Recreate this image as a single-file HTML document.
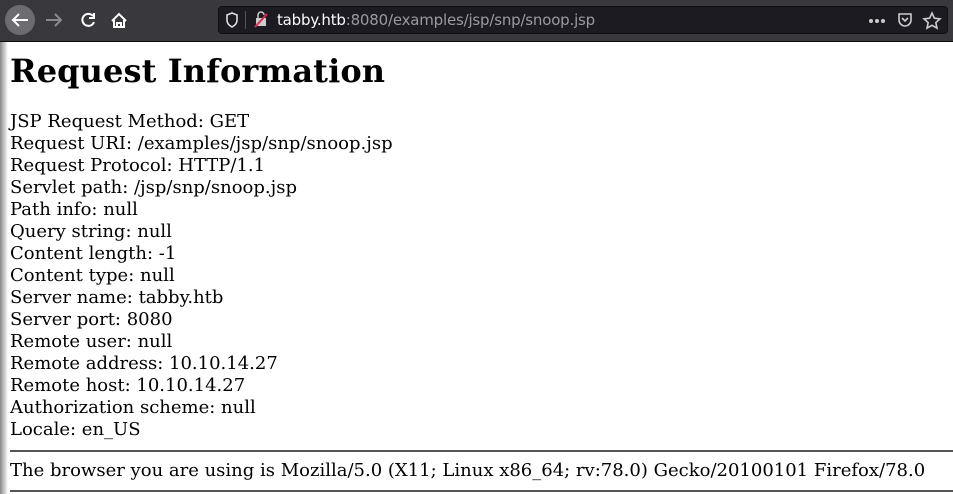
<!DOCTYPE html>
<html><head><meta charset="utf-8"><style>
html,body{margin:0;padding:0;width:953px;height:494px;overflow:hidden;background:#fff}
.tb{position:absolute;left:0;top:0;width:953px;height:41px;background:#38383d;border-bottom:1px solid #0c0c0d}
.url{position:absolute;left:218px;top:6px;width:730px;height:28px;background:#1c1b22;border:1px solid #111;border-radius:4px;box-sizing:border-box}
.urltext{position:absolute;left:277px;top:11px;font:15px "DejaVu Sans","Liberation Sans",sans-serif;color:#fbfbfe;letter-spacing:-0.2px}
.urltext span{color:#9a9aa0}
.back{position:absolute;left:5px;top:5px;width:30px;height:30px;border-radius:50%;background:#6b6b70}
.shadow{position:absolute;left:0;top:42px;width:8px;height:452px;background:linear-gradient(to right,#888,#fff)}
.page{position:absolute;left:10px;top:42px;right:0;font-family:"DejaVu Serif",serif;color:#000}
h1{font-size:32px;font-weight:bold;margin:10px 0 0;line-height:38px;letter-spacing:0.1px}
.l{font-size:18px;line-height:22px}
hr{border:0;border-top:2px solid #555;margin:0;height:0}
</style></head><body>
<div class="tb">
<div class="back"></div>
<svg style="position:absolute;left:0;top:0" width="140" height="41">
<path d="M28 20H13M19 14l-6 6 6 6" stroke="#fff" stroke-width="2" fill="none"/>
<path d="M61 20H46M55 14l6 6-6 6" stroke="#8a8a8e" stroke-width="2" fill="none"/>
<path d="M93 16a6 6 0 1 0 1 6M94 13v5h-5" stroke="#fff" stroke-width="2" fill="none"/>
<path d="M112 21l7-7 7 7M114 20v7h10v-7M117 27v-4h4v4" stroke="#fff" stroke-width="2" fill="none"/>
</svg>
<div class="url"></div>
<svg style="position:absolute;left:220px;top:8px" width="60" height="24">
<path d="M12 5l5 2v5c0 4-3 6-5 7-2-1-5-3-5-7V7z" stroke="#ddd" stroke-width="1.6" fill="none"/>
<rect x="25" y="3" width="1" height="18" fill="#555"/>
<rect x="36" y="10" width="10" height="8" fill="#ccc"/><path d="M38 10V7a3 3 0 0 1 6 0" stroke="#ccc" stroke-width="1.5" fill="none"/>
<path d="M35 19L47 6" stroke="#e22850" stroke-width="2"/>
</svg>
<div class="urltext">tabby.htb<span>:8080/examples/jsp/snp/snoop.jsp</span></div>
<svg style="position:absolute;left:860px;top:8px" width="90" height="26">
<circle cx="11" cy="13" r="2" fill="#ccc"/><circle cx="17" cy="13" r="2" fill="#ccc"/><circle cx="23" cy="13" r="2" fill="#ccc"/>
<path d="M39 6h12v6a6 6 0 0 1-12 0z" stroke="#ccc" stroke-width="1.6" fill="none"/><path d="M42 10l3 3 3-3" stroke="#ccc" stroke-width="1.6" fill="none"/>
<path d="M72 5l2.4 5.2 5.6.6-4.2 3.8 1.2 5.6-5-2.9-5 2.9 1.2-5.6-4.2-3.8 5.6-.6z" stroke="#ccc" stroke-width="1.6" fill="none"/>
</svg>
</div>
<div class="shadow"></div>
<div class="page">
<h1>Request Information</h1>
<div class="l" style="margin-top:21px">JSP Request Method: GET<br>Request URI: /examples/jsp/snp/snoop.jsp<br>Request Protocol: HTTP/1.1<br>Servlet path: /jsp/snp/snoop.jsp<br>Path info: null<br>Query string: null<br>Content length: -1<br>Content type: null<br>Server name: tabby.htb<br>Server port: 8080<br>Remote user: null<br>Remote address: 10.10.14.27<br>Remote host: 10.10.14.27<br>Authorization scheme: null<br>Locale: en_US</div>
<hr style="margin-top:9px">
<div class="l" style="margin-top:8px">The browser you are using is Mozilla/5.0 (X11; Linux x86_64; rv:78.0) Gecko/20100101 Firefox/78.0</div>
<hr style="margin-top:8px">
</div>
</body></html>
